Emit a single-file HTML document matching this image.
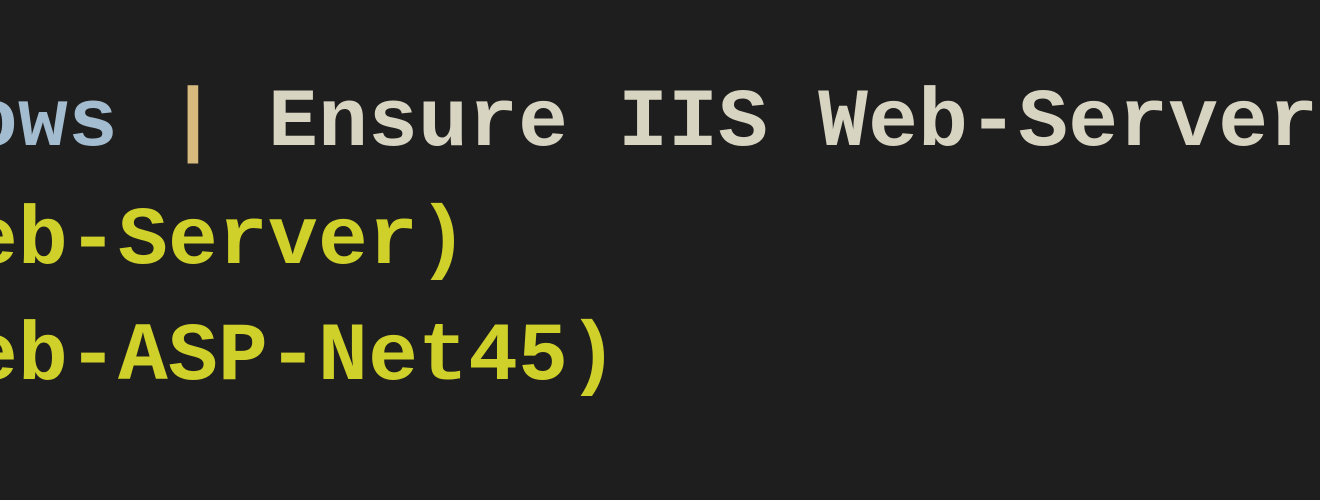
<!DOCTYPE html>
<html><head><meta charset="utf-8"><style>
html,body{margin:0;padding:0;width:1320px;height:500px;overflow:hidden;background:#1e1e1e;}
.l{position:absolute;left:-32px;font-family:"Liberation Mono","DejaVu Sans Mono",monospace;font-size:83px;font-weight:bold;white-space:pre;line-height:1;letter-spacing:0.2px;}
.a{color:#a4bccf}
.p{color:#d7ba7d}
.w{color:#d8d4c2}
.y{color:#d0d02a}
</style></head><body>
<div class="l" style="top:82px"><span class="a">ows</span> <span class="p">|</span> <span class="w">Ensure IIS Web-Server</span></div>
<div class="l y" style="top:200px">eb-Server)</div>
<div class="l y" style="top:316px">eb-ASP-Net45)</div>
</body></html>
